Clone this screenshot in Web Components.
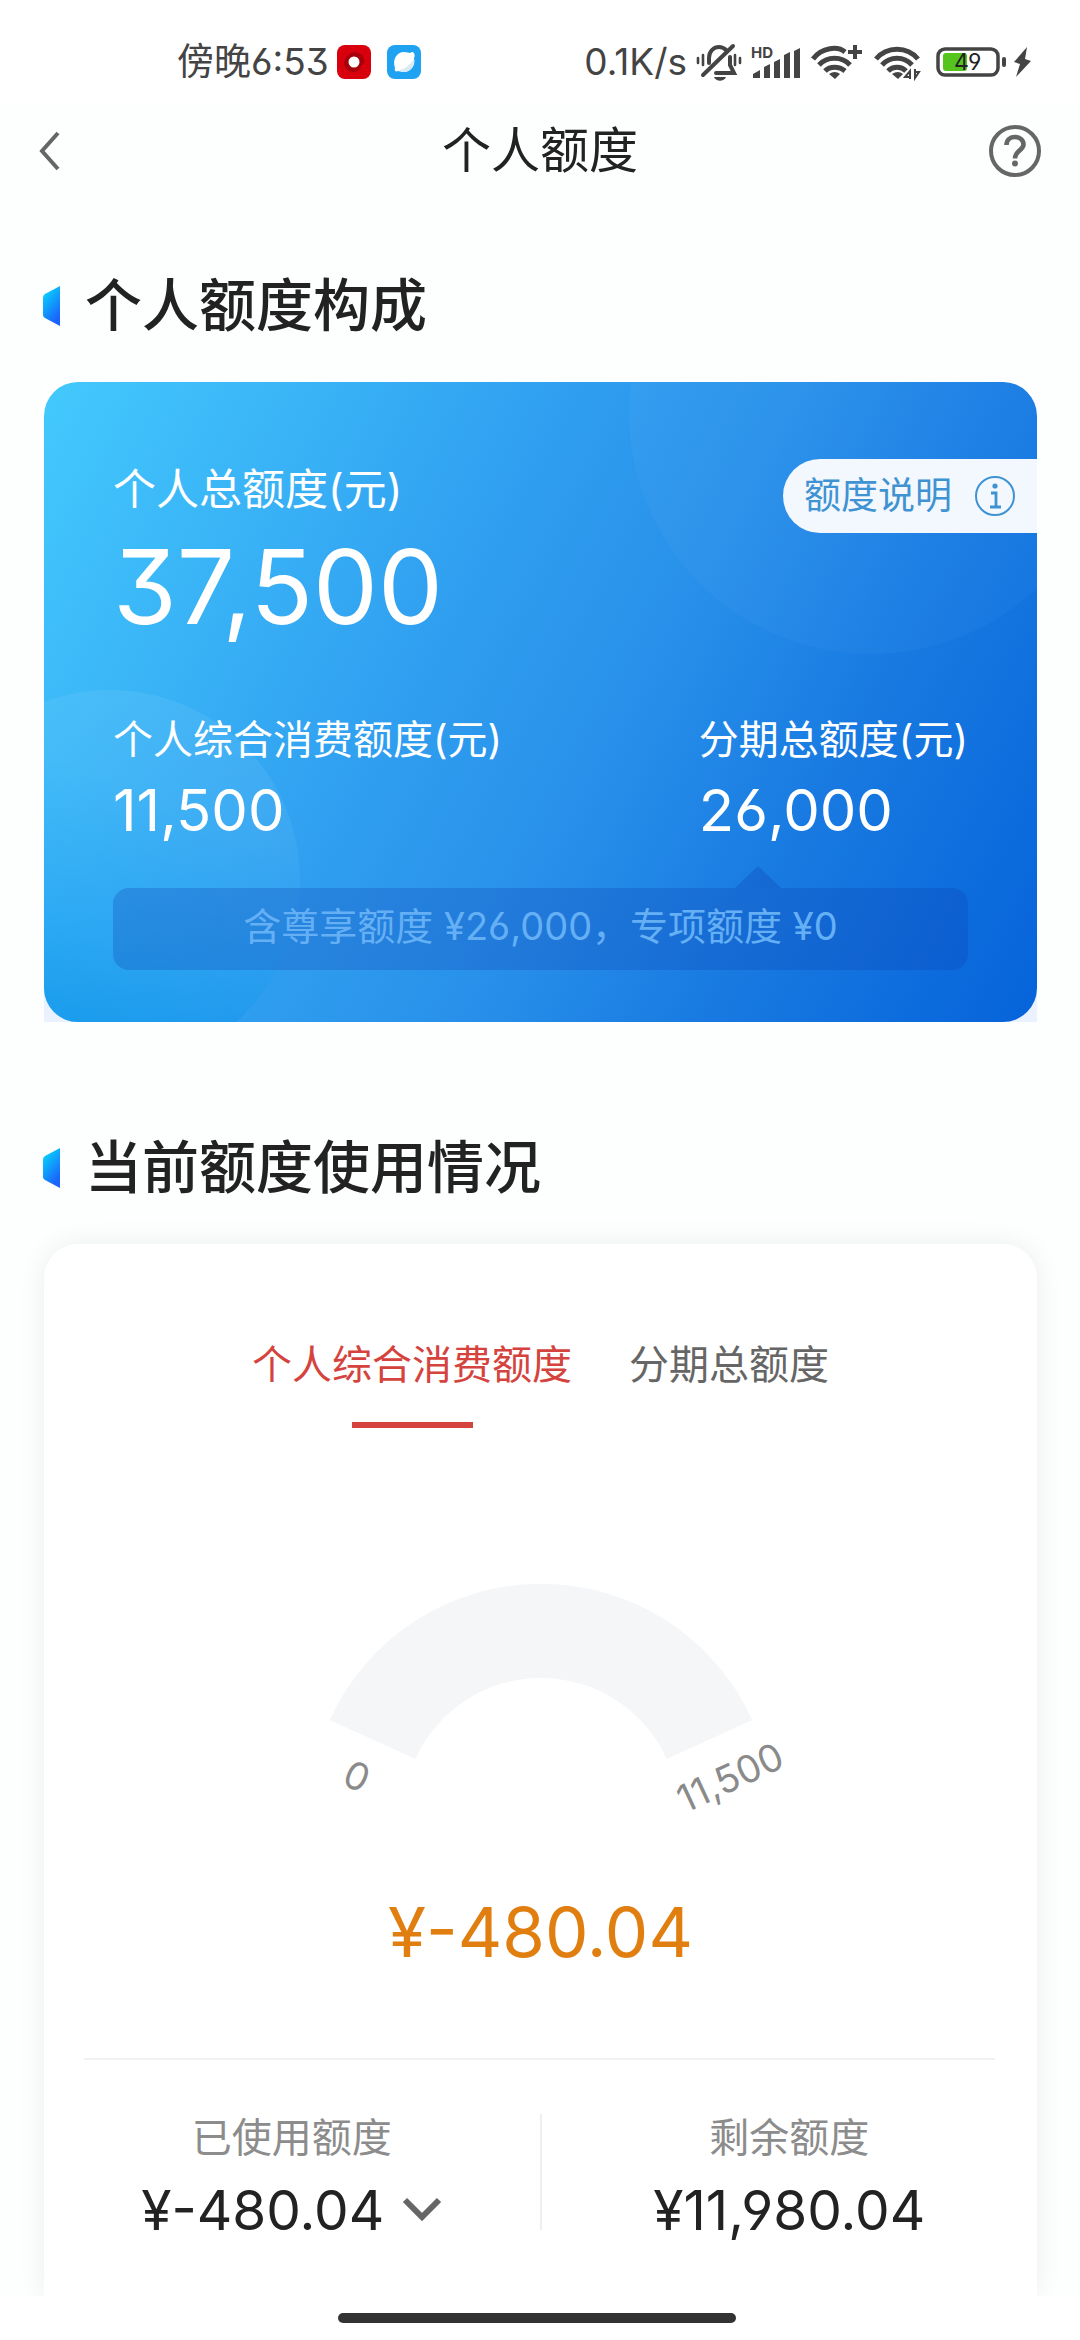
<!DOCTYPE html>
<html lang="zh-CN">
<head>
<meta charset="utf-8">
<meta name="viewport" content="width=device-width, initial-scale=1">
<title>个人额度</title>
<style>
  html, body { margin: 0; }
  body {
    min-height: 100vh;
    background: #fdfefe;
    color: #222;
    font-family: Inter, "Noto Sans CJK SC", sans-serif;
    font-feature-settings: "cv03", "cv04", "cv09";
    display: flex;
  }
</style>
</head>
<body>
<quota-page></quota-page>

<script>
const define = (name, html) => customElements.define(name, class extends HTMLElement {
  constructor() {
    super();
    const t = document.createElement('template');
    t.innerHTML = `<style>
      *, *::before, *::after { box-sizing: border-box; }
      button { appearance: none; border: 0; margin: 0; padding: 0; background: none; color: inherit; font: inherit; font-feature-settings: inherit; cursor: pointer; }
      svg { display: block; flex: none; }
    </style>` + html;
    this.attachShadow({ mode: 'open' }).append(t.content.cloneNode(true));
  }
});

define('status-bar', `
  <style>
    :host { display: flex; justify-content: space-between; align-items: center; height: 104px; padding: 20px 48px 0 177px; background: #fff; color: #444; font-size: 37px; line-height: 48px; }
    .side { display: flex; align-items: center; }
    .apps { display: flex; gap: 16px; margin-left: 8px; }
    .right { gap: 9px; }
  </style>
  <div class="side">
    <span>傍晚6:53</span>
    <span class="apps">
      <svg width="34" height="34" viewBox="0 0 34 34"><rect width="34" height="34" rx="8" fill="#d8000c"/><path d="M17 7c7 0 11 5 10 11l-6 8c-7 3-14-1-14-9 2-6 5-9 10-10z" fill="#a8000a"/><circle cx="17" cy="17" r="5.500" fill="#fff"/></svg>
      <svg width="34" height="34" viewBox="0 0 34 34"><rect width="34" height="34" rx="8" fill="#1fa2f2"/><path d="M26 7c2 2 2 4 1 6 2 8-4 14-10 14-3 0-5-1-6-1-2 1-4 0-3-3C5 14 10 7 17 7c3 0 5 1 6 1 1-1 2-1 3-1z" fill="#fff"/><path d="M27 14c1 8-5 13-10 13-2 0-4-1-5-2 6-1 11-5 15-11z" fill="#d9ebf5"/></svg>
    </span>
  </div>
  <div class="side right">
    <span>0.1K/s</span>
    <svg width="46" height="38" viewBox="0 0 46 38" fill="none" stroke="#444" stroke-width="4" stroke-linecap="round">
      <path d="M13 20V15c0-7 5-11 10-11 3 0 5 1 7 3M34 14v8l4 8H20M7 32 37 3"/><path d="M18 34h12c-2 5-10 5-12 0z" fill="#444" stroke="none"/><path d="M7 12v10M2 15v5M39 12v10M44 15v5" stroke-width="2.600"/>
    </svg>
    <svg width="50" height="38" viewBox="0 0 50 38" fill="#444">
      <text x="0" y="15" font-size="15" font-weight="700" font-family="Inter, sans-serif">HD</text>
      <path d="M2 35v-4l7-4v8zM13 35V24l6-3v14zM23 35V19l6-3v19zM33 35V12l6-3v26zM43 35V8l6-3v30z"/>
    </svg>
    <svg width="54" height="38" viewBox="0 0 54 38" fill="none" stroke="#444" stroke-width="5">
      <path d="M3 16C12 4 28 3 35 9M9 22c8-9 23-9 31 0M15 28c5-5 14-5 20 0"/><path d="M19 31q6-4 11 0l-5 5z" fill="#444" stroke="none"/><path d="M45 2v14M38 9h14" stroke-width="4"/>
    </svg>
    <svg width="48" height="38" viewBox="0 0 48 38" fill="none" stroke="#444" stroke-width="5">
      <path d="M3 16C14 3 34 3 45 16M9 22c8-9 22-9 30 0M15 28c5-5 13-5 18 0"/><path d="M19 31q6-4 11 0l-5 5z" fill="#444" stroke="none"/><path d="M37 36v-8l-5 6h5M42 26v9l4-6h-4" stroke-width="2"/>
    </svg>
    <svg width="102" height="38" viewBox="0 0 102 38">
      <rect x="8" y="6" width="60" height="26" rx="7" fill="none" stroke="#444" stroke-width="3.500"/>
      <rect x="13" y="10" width="24" height="18" rx="3" fill="#55c51e"/>
      <rect x="72" y="14" width="4" height="10" rx="2" fill="#444"/>
      <text x="24" y="27" font-size="23" font-family="Inter, sans-serif" fill="#222">49</text>
      <path d="M97 4 84 19l6 2-4 13 15-16-6-2z" fill="#444"/>
    </svg>
  </div>
`);

define('nav-bar', `
  <style>
    :host { display: grid; grid-template-columns: 1fr auto 1fr; align-items: center; height: 94px; padding: 0 38px; }
    h1 { margin: 0; font-size: 49px; line-height: 64px; font-weight: 400; }
    .help { justify-self: end; }
    .back { justify-self: start; }
  </style>
  <button class="back" aria-label="返回"><svg width="24" height="40" viewBox="0 0 24 40" fill="none" stroke="#666" stroke-width="4"><path d="M20 2 4 20l16 18"/></svg></button>
  <h1><slot></slot></h1>
  <button class="help" aria-label="帮助"><svg width="54" height="54" viewBox="0 0 54 54" fill="none" stroke="#666" stroke-width="4"><circle cx="27" cy="27" r="24"/><path d="M18.500 21c0-5.500 4-8 8.500-8s8.500 3 8.500 7.500c0 6-8.500 6-8.500 14" stroke-width="4.600"/><circle cx="27" cy="39.500" r="3" fill="#666" stroke="none"/></svg></button>
`);

define('section-title', `
  <style>
    :host { display: flex; align-items: center; gap: 25px; padding-left: 43px; margin-bottom: 36px; }
    h2 { margin: 0; font-size: 57px; line-height: 80px; font-weight: 500; }
  </style>
  <svg width="17" height="42" viewBox="0 0 17 42"><defs><linearGradient id="g" x1="0" y1="0" x2=".5" y2="1"><stop offset="0" stop-color="#05e4fd"/><stop offset="1" stop-color="#1a62fb"/></linearGradient></defs><path d="M17 1v40L2 33q-2-1-2-3V13q0-3 2-4z" fill="url(#g)"/></svg>
  <h2><slot></slot></h2>
`);

define('info-pill', `
  <style>
    :host { display: block; }
    button { display: flex; align-items: center; gap: 22px; height: 74px; padding: 0 21px; border-radius: 37px 0 0 37px; background: #f3f7fe; color: #3f93d2; font-size: 37px; line-height: 48px; }
  </style>
  <button><slot></slot><svg width="42" height="42" viewBox="0 0 42 42" fill="none" stroke="#3f93d2" stroke-width="2"><circle cx="21" cy="21" r="19"/><path d="M17 18h5v14M16 32h11" stroke-width="2.800"/><circle cx="21" cy="11" r="2.600" fill="#3f93d2" stroke="none"/></svg></button>
`);

define('amount-item', `
  <style>
    :host { display: flex; flex-direction: column; gap: 8px; font-size: 40px; line-height: 60px; }
    .value { font-size: 58px; line-height: 64px; }
    :host([large]) { gap: 12px; font-size: 43px; }
    :host([large]) .value { font-size: 103px; line-height: 112px; }
  </style>
  <span><slot name="label"></slot></span>
  <span class="value"><slot></slot></span>
`);

define('quota-card', `
  <style>
    :host { display: block; margin: 0 43px 0 44px; background: linear-gradient(#fff, #eaf1ff); }
    .card {
      position: relative; overflow: hidden; border-radius: 34px; padding: 77px 69px 52px; color: #fff;
      background: linear-gradient(118deg, #43c9fd, #309ff0 39%, #2890ea 57%, #187ae1 75%, #0663da);
    }
    .card::before, .card::after { content: ""; position: absolute; border-radius: 50%; }
    .card::before { width: 484px; height: 484px; right: -76px; top: -212px; background: linear-gradient(100deg, rgba(255,255,255,.03), rgba(60,150,250,.1)); }
    .card::after { width: 380px; height: 380px; left: -124px; top: 308px; background: linear-gradient(200deg, rgba(255,255,255,.08), rgba(150,215,250,.1) 30%, rgba(20,155,240,.3) 60%, rgba(0,140,228,.65) 90%); }
    .top, .row, .note { position: relative; z-index: 1; display: flex; justify-content: space-between; }
    .top { align-items: flex-start; margin-right: -69px; }
    .row { margin-top: 67px; }
    .note { justify-content: center; margin-top: 46px; border-radius: 16px; background: rgba(15,60,175,.26); color: #65b0f5; font-size: 38px; line-height: 48px; padding: 14px 0 20px; white-space: pre; }
    .note::before { content: ""; position: absolute; right: 187px; top: -22px; width: 46px; height: 22px; background: rgba(15,60,175,.28); clip-path: polygon(50% 0, 100% 100%, 0 100%); }
  </style>
  <div class="card">
    <div class="top">
      <amount-item large><span slot="label">个人总额度(元)</span>37,500</amount-item>
      <info-pill>额度说明</info-pill>
    </div>
    <div class="row">
      <amount-item><span slot="label">个人综合消费额度(元)</span>11,500</amount-item>
      <amount-item><span slot="label">分期总额度(元)</span>26,000</amount-item>
    </div>
    <div class="note">含尊享额度 ¥26,000，专项额度 ¥0</div>
  </div>
`);

define('quota-tabs', `
  <style>
    :host { display: flex; justify-content: center; gap: 57px; font-size: 40px; line-height: 60px; color: #666; }
    button { display: flex; flex-direction: column; align-items: center; gap: 27px; }
    button::after { content: ""; width: 121px; height: 6px; }
    [aria-selected="true"] { color: #d5433e; }
    [aria-selected="true"]::after { background: currentColor; }
  </style>
  <button role="tab" aria-selected="true">个人综合消费额度</button>
  <button role="tab" aria-selected="false">分期总额度</button>
`);

define('quota-gauge', `
  <style>
    :host { display: flex; flex-direction: column; align-items: center; }
    text { font-size: 38px; fill: #8a8a8a; text-anchor: middle; }
    .value { margin-top: 64px; font-size: 69px; line-height: 88px; color: #e07f10; }
  </style>
  <svg width="560" height="240" viewBox="-40 0 560 240">
    <path d="M28.700 136A232 232 0 0 1 451.300 136L365.700 175A138 138 0 0 0 114.300 175Z" fill="#f5f6f8"/>
    <text transform="translate(56 192) rotate(25)" y="14">0</text>
    <text transform="translate(429 193) rotate(-25)" y="14">11,500</text>
  </svg>
  <span class="value"><slot></slot></span>
`);

define('usage-stat', `
  <style>
    :host { display: flex; flex-direction: column; align-items: center; gap: 16px; }
    .label { color: #8c8c8c; font-size: 40px; line-height: 48px; }
    .value { font-size: 55px; line-height: 64px; }
  </style>
  <span class="label"><slot name="label"></slot></span>
  <span class="value"><slot></slot></span>
`);

define('expand-button', `
  <style>
    :host { display: block; }
    button { display: flex; align-items: center; gap: 18px; }
  </style>
  <button aria-expanded="false"><slot></slot><svg width="40" height="26" viewBox="0 0 40 26" fill="none" stroke="#666" stroke-width="6"><path d="M3 3 20 20 37 3"/></svg></button>
`);

define('usage-card', `
  <style>
    :host { flex: 1; display: flex; flex-direction: column; margin: 0 43px 0 44px; padding-top: 91px; border-radius: 34px 34px 0 0; background: #fff; box-shadow: 0 0 28px rgba(0,0,0,.07); }
    quota-gauge { margin-top: 156px; }
    hr { align-self: stretch; margin: 82px 42px 54px 40px; border: 0; height: 2px; background: #f1f1f1; }
    .stats { display: grid; grid-template-columns: 1fr 2px 1fr; padding-bottom: 54px; }
    .line { height: 116px; background: #efefef; }
  </style>
  <quota-tabs role="tablist"></quota-tabs>
  <quota-gauge>¥-480.04</quota-gauge>
  <hr>
  <div class="stats">
    <usage-stat><span slot="label">已使用额度</span><expand-button>¥-480.04</expand-button></usage-stat>
    <span class="line"></span>
    <usage-stat><span slot="label">剩余额度</span>¥11,980.04</usage-stat>
  </div>
`);

define('home-indicator', `
  <style>
    :host { display: flex; justify-content: center; box-sizing: border-box; height: 44px; padding: 17px 6px 0 0; background: #fff; position: relative; }
    span { width: 37%; height: 10px; border-radius: 5px; background: #333; }
  </style>
  <span></span>
`);

define('quota-page', `
  <style>
    :host { flex: 1; min-width: 0; display: flex; flex-direction: column; }
    status-bar, nav-bar { box-sizing: border-box; }
    main { flex: 1; display: flex; flex-direction: column; padding-top: 68px; }
    .usage { flex: 1; display: flex; flex-direction: column; margin-top: 106px; }
  </style>
  <status-bar></status-bar>
  <nav-bar>个人额度</nav-bar>
  <main>
    <section>
      <section-title>个人额度构成</section-title>
      <quota-card></quota-card>
    </section>
    <section class="usage">
      <section-title>当前额度使用情况</section-title>
      <usage-card></usage-card>
    </section>
  </main>
  <home-indicator></home-indicator>
`);
</script>
</body>
</html>
